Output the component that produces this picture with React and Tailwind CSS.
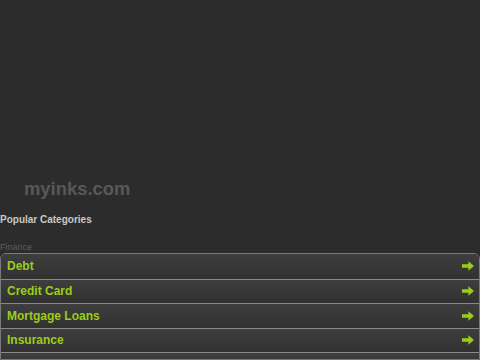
import React from "react";

const items = ["Debt", "Credit Card", "Mortgage Loans", "Insurance", "Taxes"];

const Arrow = () => (
  <svg viewBox="0 0 12 10" className="w-[12px] h-[10px]" fill="#9acd1a">
    <path d="M0 3.3h6.4V0.2L12 5l-5.6 4.8V6.7H0z" />
  </svg>
);

const App = () => {
  return (
    <div
      className="w-[480px] h-[360px] overflow-hidden bg-[#2c2c2c] flex flex-col"
      style={{ fontFamily: '"Liberation Sans", Arial, sans-serif' }}
    >
      <div className="h-[178px] shrink-0" />
      <h1 className="pl-[24px] text-[18.4px] leading-[22px] font-bold text-[#585858]">
        myinks.com
      </h1>
      <h2 className="mt-[13px] text-[10px] leading-[14px] font-bold text-[#c8c8c8]">
        Popular Categories
      </h2>
      <p className="mt-[15px] text-[9px] leading-[10px] text-[#5c5c5c]">Finance</p>
      <ul className="mt-[1px] border border-[#7a7a7a] rounded-t-[6px] overflow-hidden">
        {items.map((item, i) => (
          <li
            key={item}
            className={`h-[24.5px] flex items-center justify-between pl-[6px] pr-[5px] bg-gradient-to-b from-[#3e3e3e] to-[#313131] ${
              i > 0 ? "border-t border-[#8a8a8a]" : ""
            }`}
          >
            <span className="text-[12px] font-bold text-[#9acd1a]">{item}</span>
            <Arrow />
          </li>
        ))}
      </ul>
    </div>
  );
};

export default App;
